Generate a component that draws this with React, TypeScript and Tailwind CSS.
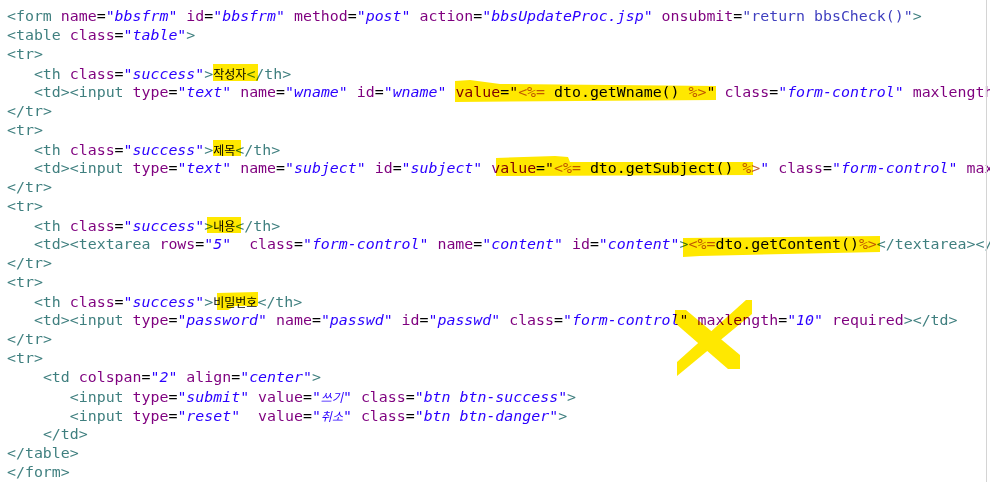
import React from "react";

type Tok = { t: string; c: string };

const LINES: string[] = [
  '<form name="bbsfrm" id="bbsfrm" method="post" action="bbsUpdateProc.jsp" onsubmit="return bbsCheck()">',
  '<table class="table">',
  "<tr>",
  '   <th class="success">작성자</th>',
  '   <td><input type="text" name="wname" id="wname" value="<%= dto.getWname() %>" class="form-control" maxlength="15" required></td>',
  "</tr>",
  "<tr>",
  '   <th class="success">제목</th>',
  '   <td><input type="text" name="subject" id="subject" value="<%= dto.getSubject() %>" class="form-control" maxlength="30" required></td>',
  "</tr>",
  "<tr>",
  '   <th class="success">내용</th>',
  '   <td><textarea rows="5"  class="form-control" name="content" id="content"><%=dto.getContent()%></textarea></td>',
  "</tr>",
  "<tr>",
  '   <th class="success">비밀번호</th>',
  '   <td><input type="password" name="passwd" id="passwd" class="form-control" maxlength="10" required></td>',
  "</tr>",
  "<tr>",
  '    <td colspan="2" align="center">',
  '       <input type="submit" value="쓰기" class="btn btn-success">',
  '       <input type="reset"  value="취소" class="btn btn-danger">',
  "    </td>",
  "</table>",
  "</form>",
];

function pushJspAware(out: Tok[], s: string, cls: string) {
  let i = 0;
  while (i < s.length) {
    const k = s.indexOf("<%=", i);
    if (k < 0) {
      out.push({ t: s.slice(i), c: cls });
      break;
    }
    if (k > i) out.push({ t: s.slice(i, k), c: cls });
    const e = s.indexOf("%>", k + 3);
    out.push({ t: "<%=", c: "jsp" });
    out.push({ t: s.slice(k + 3, e), c: "code" });
    out.push({ t: "%>", c: "jsp" });
    i = e + 2;
  }
}

function tokenize(line: string): Tok[] {
  const out: Tok[] = [];
  let i = 0;
  let inTag = false;
  let lastAttr = "";
  while (i < line.length) {
    if (line.startsWith("<%=", i)) {
      const e = line.indexOf("%>", i + 3);
      out.push({ t: "<%=", c: "jsp" });
      out.push({ t: line.slice(i + 3, e), c: "code" });
      out.push({ t: "%>", c: "jsp" });
      i = e + 2;
      continue;
    }
    if (!inTag) {
      if (line[i] === "<") {
        let j = i + 1;
        if (line[j] === "/") j++;
        while (j < line.length && /[a-zA-Z]/.test(line[j])) j++;
        out.push({ t: line.slice(i, j), c: "tag" });
        i = j;
        inTag = true;
        continue;
      }
      let j = i;
      while (j < line.length && line[j] !== "<") j++;
      out.push({ t: line.slice(i, j), c: "text" });
      i = j;
      continue;
    }
    const ch = line[i];
    if (ch === ">") {
      out.push({ t: ">", c: "tag" });
      i++;
      inTag = false;
      continue;
    }
    if (ch === " ") {
      let j = i;
      while (line[j] === " ") j++;
      out.push({ t: line.slice(i, j), c: "text" });
      i = j;
      continue;
    }
    if (ch === "=") {
      out.push({ t: "=", c: "text" });
      i++;
      continue;
    }
    if (ch === '"') {
      const e = line.indexOf('"', i + 1);
      const cls = lastAttr === "onsubmit" ? "script" : "val";
      out.push({ t: '"', c: cls });
      pushJspAware(out, line.slice(i + 1, e), cls);
      out.push({ t: '"', c: cls });
      i = e + 1;
      continue;
    }
    let j = i;
    while (j < line.length && /[a-zA-Z-]/.test(line[j])) j++;
    if (j === i) j = i + 1;
    lastAttr = line.slice(i, j);
    out.push({ t: lastAttr, c: "attr" });
    i = j;
  }
  return out;
}

const CLS: Record<string, string> = {
  tag: "text-[#3f7f7f]",
  attr: "text-[#7f007f]",
  val: "text-[#2a00ff] italic",
  script: "text-[#3f3fbf]",
  jsp: "text-[#bf5f3f]",
  code: "text-black",
  text: "text-black",
};

function renderText(s: string, key: string) {
  const parts = s.split(/([\uAC00-\uD7A3]+)/);
  return parts.map((p, i) =>
    /[\uAC00-\uD7A3]/.test(p) ? (
      <span
        key={key + "-" + i}
        className="text-[12px] font-['Noto_Sans_CJK_KR',sans-serif]"
      >
        {p}
      </span>
    ) : (
      <React.Fragment key={key + "-" + i}>{p}</React.Fragment>
    )
  );
}

export default function App() {
  return (
    <div className="relative w-[990px] h-[482px] overflow-hidden bg-white">
      <div className="pl-[7px] pt-[7px] font-['DejaVu_Sans_Mono',monospace] text-[14.9px] leading-[19px] whitespace-pre">
        {LINES.map((line, li) => (
          <div key={li} className="h-[19px]">
            {tokenize(line).map((tk, ti) => (
              <span key={ti} className={CLS[tk.c]}>
                {renderText(tk.t, li + "-" + ti)}
              </span>
            ))}
          </div>
        ))}
      </div>
      <div className="absolute top-0 right-[3px] w-px h-full bg-[#d4d4d4]" />
      <svg
        className="absolute inset-0 mix-blend-multiply pointer-events-none"
        width="990"
        height="482"
        viewBox="0 0 990 482"
      >
        <g fill="#ffe800">
          <rect x="213" y="64" width="45" height="17" />
          <polygon points="455,81 470,80 500,84 716,86 716,100 455,102" />
          <rect x="213" y="140" width="28" height="16" />
          <polygon points="496,158 555,156 568,157 570,162 753,162 753,175 496,176" />
          <rect x="207" y="217" width="34" height="16" />
          <polygon points="683,238 880,236 880,252 700,256 683,257" />
          <polygon points="217,293 258,292 258,306 235,306 228,310 217,310" />
          <polygon points="746,300 752,300 752,314 677,376 677,362" />
          <polygon points="675,310 686,310 740,355 740,369 728,369 675,323" />
        </g>
      </svg>
    </div>
  );
}
